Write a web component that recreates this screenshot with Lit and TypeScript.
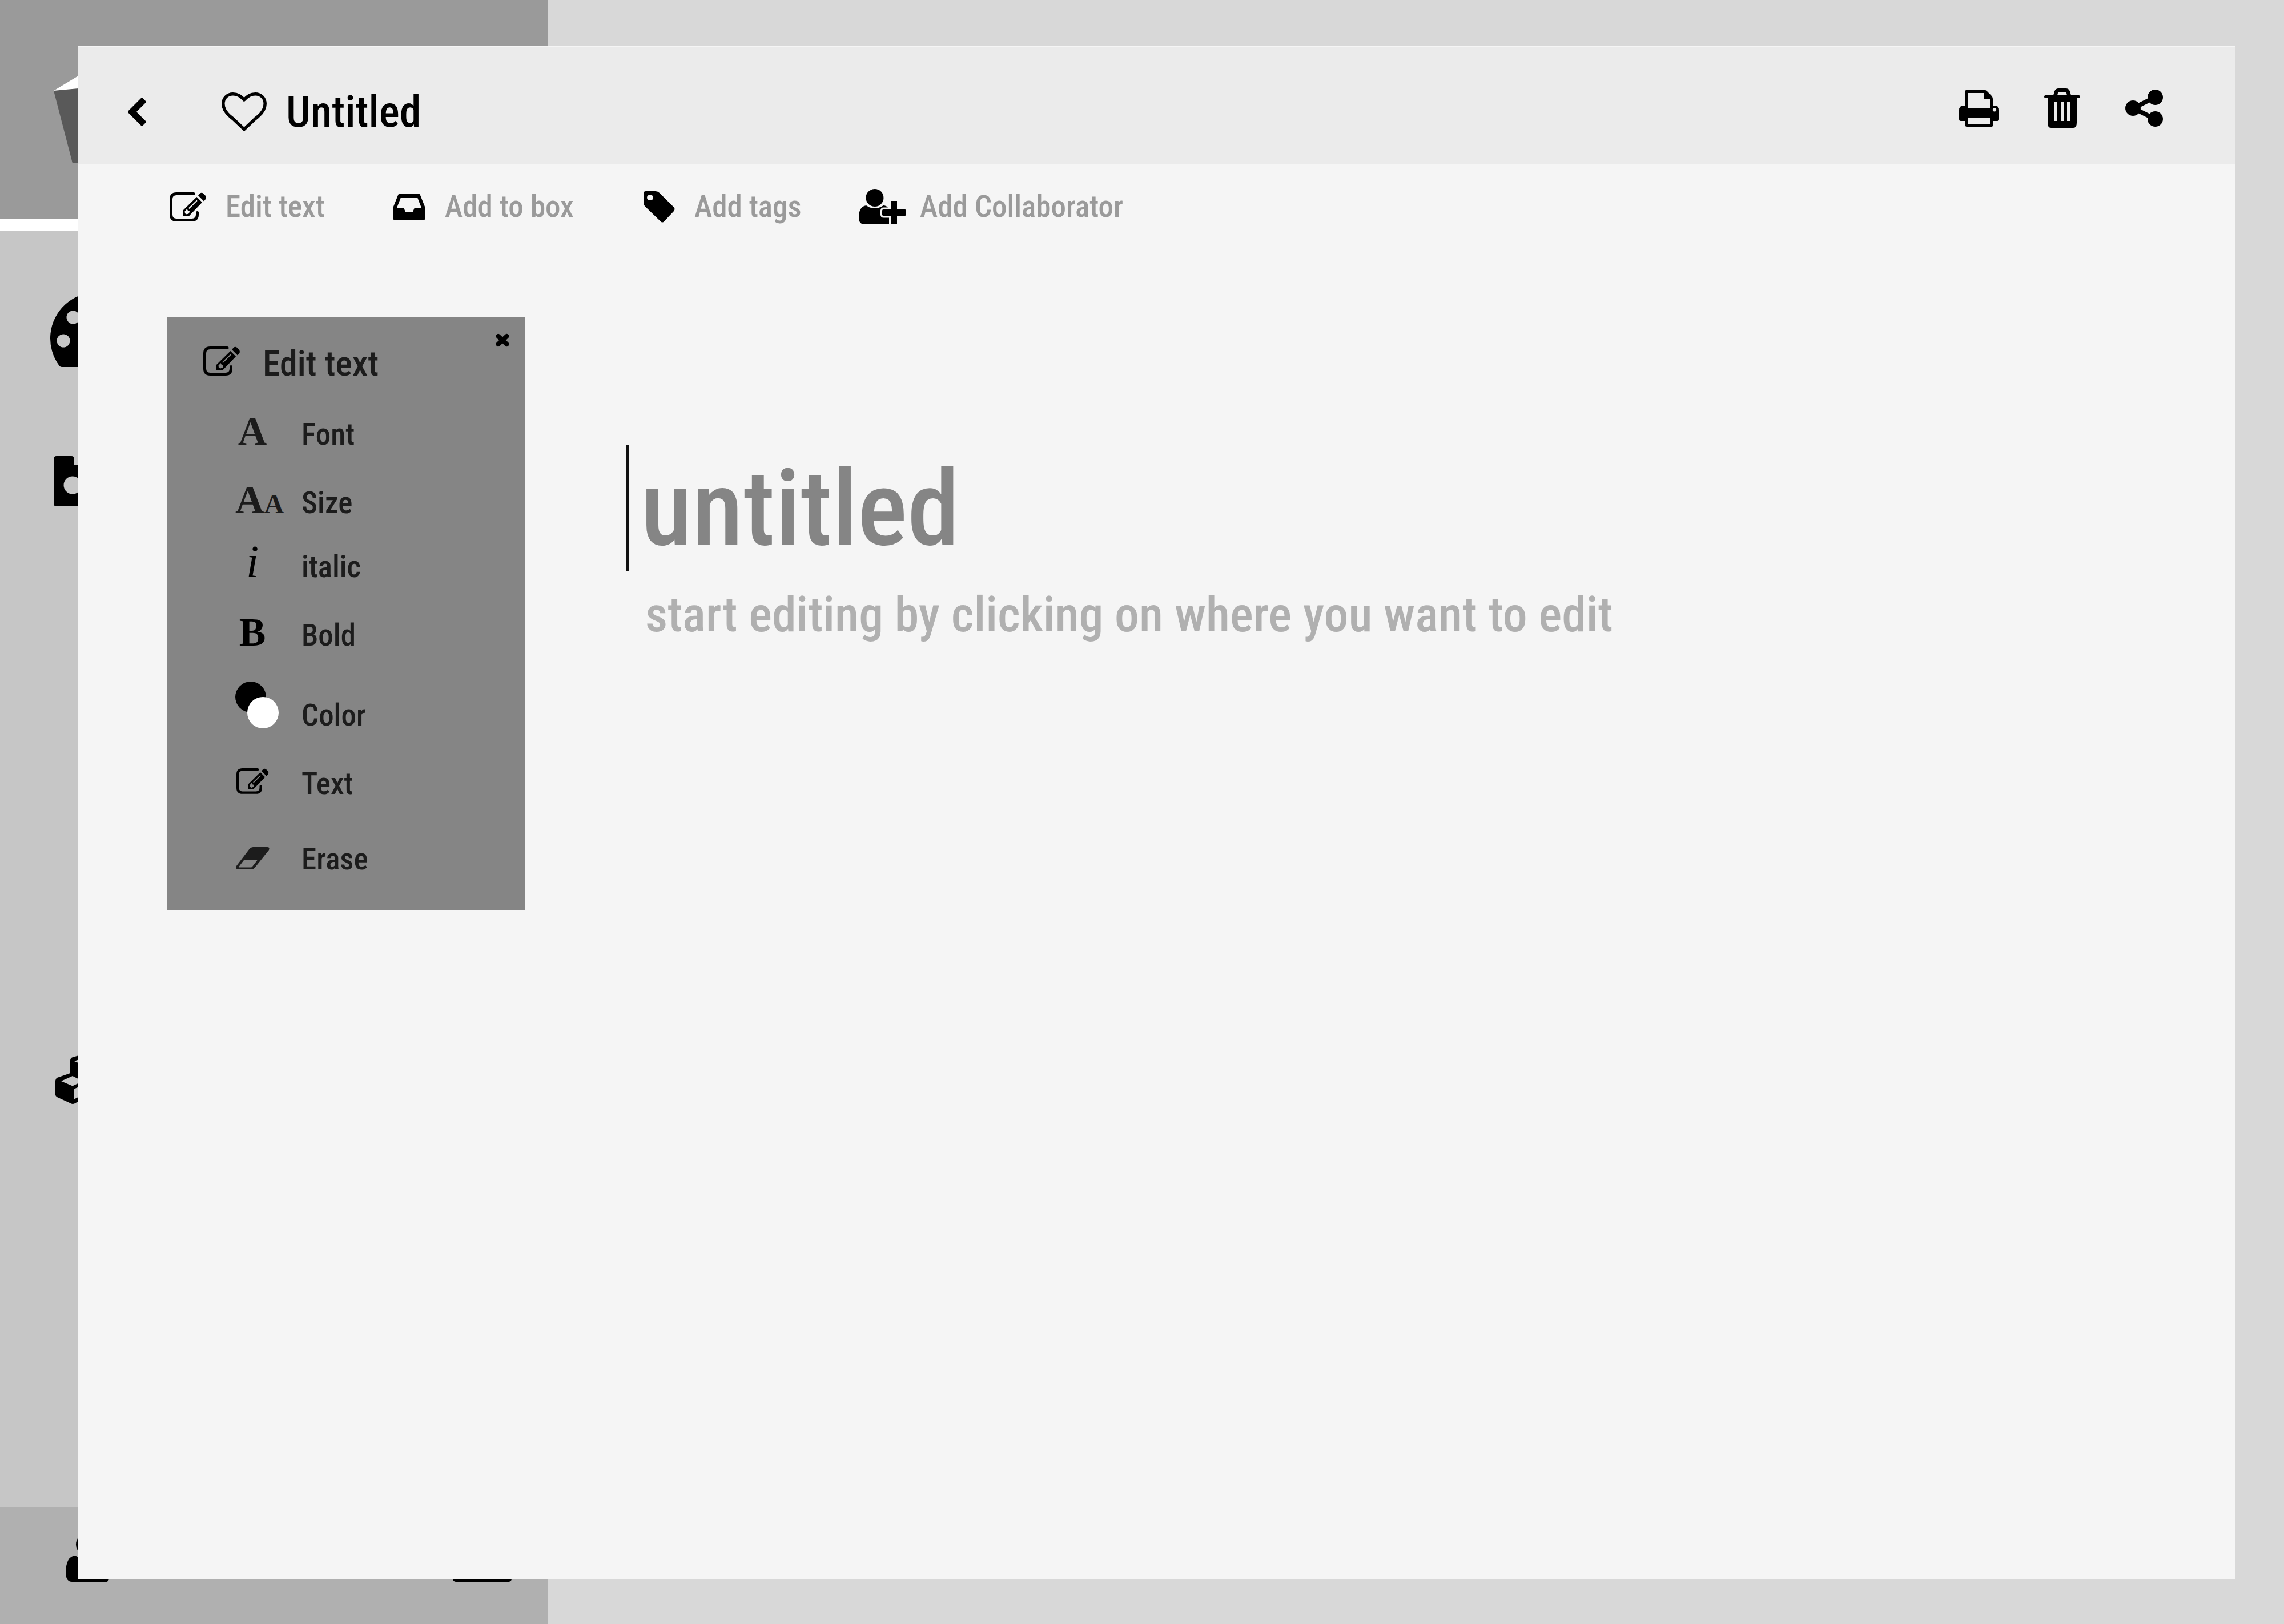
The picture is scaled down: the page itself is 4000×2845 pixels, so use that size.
import { LitElement, css, html, svg, nothing } from "lit";
import { customElement, property } from "lit/decorators.js";

interface Glyph {
  w: number;
  h: number;
  art: unknown;
}

const GLYPHS: Record<string, Glyph> = {
  back: {
    w: 32, h: 50,
    art: svg`<path d="M31 9 15 25 31 41Q32.500 42.500 31 44L26 49Q24.500 50.500 23 49L1 27Q-1 25 1 23L23 1Q24.500 -.5 26 1L31 6Q32.500 7.500 31 9Z"/>`,
  },
  heart: {
    w: 79, h: 67,
    art: svg`<path fill="none" stroke="currentColor" stroke-width="5.500" stroke-linejoin="round" d="M39.500 13C33 6 28 2.800 20 2.800 10 2.800 2.800 10 2.800 20 2.800 29 8 36 15 42L20 46 39.500 64.500 59 46 64 42C71 36 76.200 29 76.200 20 76.200 10 69 2.800 59 2.800 51 2.800 46 6 39.500 13Z"/>`,
  },
  print: {
    w: 70, h: 65,
    art: svg`<path fill-rule="evenodd" d="M11 28V3Q11 0 14 0H43Q46 0 49 3L56 10Q59 13 59 16V28H62Q70 28 70 36V52Q70 55 67 55H59V63Q59 65 57 65H13Q11 65 11 63V55H3Q0 55 0 52V36Q0 28 8 28ZM16 6V33H54V17H46Q43 17 43 14V6ZM16 49V60H54V49ZM62 32A3.200 3.200 0 1 0 62 38.400 3.200 3.200 0 1 0 62 32Z"/>`,
  },
  trash: {
    w: 63, h: 69,
    art: svg`<path fill-rule="evenodd" d="M16 12 18 5Q20 0 25 0H38Q43 0 45 5L47 12H61Q63 12 63 14.500T61 17H57V60Q57 69 51 69H12Q6 69 6 60V17H2Q0 17 0 14.500T2 12ZM23 12H40L39 8Q38 6 36 6H27Q25 6 24 8ZM17 23V57H23V23ZM29 23V57H34V23ZM40 23V57H46V23Z"/>`,
  },
  share: {
    w: 66, h: 65,
    art: svg`<path fill="none" stroke="currentColor" stroke-width="8" d="M52 13.500 14 32.500 52 51.500"/><circle cx="13.500" cy="32.500" r="13.500"/><circle cx="52.500" cy="13.500" r="13.500"/><circle cx="52.500" cy="51.500" r="13.500"/>`,
  },
  edit: {
    w: 64, h: 51,
    art: svg`<path fill="none" stroke="currentColor" stroke-width="5" stroke-linecap="round" d="M42 2.500H12Q2.500 2.500 2.500 12V39Q2.500 48.500 12 48.500H39Q48.500 48.500 48.500 39V35.500"/><path fill-rule="evenodd" d="M23 42V32L47.500 8 57 17.500 33.500 42ZM26.500 33.500 27 37 30 38.500 34 37 35 33 32 32 30.500 29ZM33 27.500 34.500 29 48.500 15 47.500 13.500Z"/><path d="M50 5.500 53 2Q56 -.5 59 2L62.500 5.500Q65 9 63 12L60 15.500Z"/>`,
  },
  inbox: {
    w: 57, h: 46,
    art: svg`<path fill-rule="evenodd" d="M2 46Q0 46 0 44V27Q0 25 1 23L9 3Q10 0 13 0H44Q47 0 48 3L56 23Q57 25 57 27V44Q57 46 55 46ZM14 7 7 25H19L22 32H35L38 25H50L43 7Z"/>`,
  },
  tag: {
    w: 55, h: 55,
    art: svg`<path fill-rule="evenodd" d="M4 0H21Q25 0 28 3L53 28Q56 31 53 35L36 53Q33 56 30 53L3 27Q0 24 0 20V4Q0 0 4 0ZM11.500 6.500A4.800 4.800 0 1 0 11.500 16 4.800 4.800 0 1 0 11.500 6.500Z"/>`,
  },
  addUser: {
    w: 83, h: 62,
    art: svg`<circle cx="28" cy="15.500" r="15.500"/><path d="M13 29Q20 34 28 34T43 29Q48 29 51 32.500H44Q38 32.500 38 38V45Q38 50.500 44 50.500H53V62H10Q0 62 0 50 0 31 13 29Z"/><path d="M57 21H67V36H81Q83 36 83 38V45Q83 47 81 47H67V62H57V47H43Q41 47 41 45V38Q41 36 43 36H57Z"/>`,
  },
  close: {
    w: 24, h: 22,
    art: svg`<path fill="none" stroke="currentColor" stroke-width="8" stroke-linecap="round" d="M4.500 4 19.500 18M19.500 4 4.500 18"/>`,
  },
  swatches: {
    w: 76, h: 77,
    art: svg`<circle cx="27" cy="27" r="27"/><circle cx="48.500" cy="54.500" r="27.500" fill="#fff"/>`,
  },
  eraser: {
    w: 59, h: 39,
    art: svg`<path fill-rule="evenodd" d="M24 3Q27 0 30 0H55Q60 0 58 5L34 35Q31 39 27 39H3Q-1 38 1 33ZM14 23 5.500 34Q5 35.500 6 35.500H26Q28 35.500 29 34L37.500 23Z"/>`,
  },
  logo: {
    w: 120, h: 153,
    art: svg`<path fill="#fff" d="M0 26 43 0H120V26Z"/><path fill="#595959" d="M0 26 43 22 120 26V153H33Z"/>`,
  },
  gauge: {
    w: 161, h: 127,
    art: svg`<path fill-rule="evenodd" d="M16 125A80.500 80.500 0 1 1 145 125Q143 127 141 127H20Q18 127 16 125ZM23 69.500A11.500 11.500 0 1 0 23 92.500 11.500 11.500 0 1 0 23 69.500ZM40 28.500A11.500 11.500 0 1 0 40 51.500 11.500 11.500 0 1 0 40 28.500ZM81 11.500A11.500 11.500 0 1 0 81 34.500 11.500 11.500 0 1 0 81 11.500ZM122 28.500A11.500 11.500 0 1 0 122 51.500 11.500 11.500 0 1 0 122 28.500Z"/>`,
  },
  album: {
    w: 116, h: 88,
    art: svg`<path fill-rule="evenodd" d="M5 0H31Q36 0 36 5V15H111Q116 15 116 20V83Q116 88 111 88H5Q0 88 0 83V5Q0 0 5 0ZM33 35.500A15.500 15.500 0 1 0 33 66.500 15.500 15.500 0 1 0 33 35.500Z"/>`,
  },
  boxes: {
    w: 104, h: 85,
    art: svg`<path fill-rule="evenodd" d="M0 44Q0 41 3 39L26 31V9Q26 5 29 3.500L41 0H63L78 8V31L101 39Q104 41 104 44V70L74 85 52 74 34 84Q30 86 27 84L3 73Q0 71 0 69ZM10 45 30 53.500 48 45 30 36ZM32 59V77L48 69V52ZM33 10 52 18 70 10 52 3Z"/>`,
  },
  user: {
    w: 75, h: 85,
    art: svg`<circle cx="37.500" cy="19.500" r="19.500"/><path d="M17 39Q25 46 37.500 46T58 39Q75 40 76 70V80Q75 84 72 85H11Q0 85 0 68 1 40 17 39Z"/>`,
  },
  mail: {
    w: 103, h: 84,
    art: svg`<rect width="103" height="84" rx="5"/>`,
  },
};

@customElement("line-icon")
export class LineIcon extends LitElement {
  @property() name = "";

  static styles = css`
    :host { display: inline-block; flex: none; vertical-align: bottom; }
    .glyph { display: block; fill: currentColor; overflow: visible; }
  `;

  render() {
    const g = GLYPHS[this.name];
    if (!g) return nothing;
    return html`<svg class="glyph" width=${g.w} height=${g.h} viewBox="0 0 ${g.w} ${g.h}" aria-hidden="true">${g.art}</svg>`;
  }
}

const ACTIONS = [
  { icon: "edit", label: "Edit text" },
  { icon: "inbox", label: "Add to box" },
  { icon: "tag", label: "Add tags" },
  { icon: "addUser", label: "Add Collaborator" },
];

const TOOLS = [
  { label: "Font", mark: html`<span class="letter soft">A</span>` },
  { label: "Size", mark: html`<span class="letter soft">A<span class="small">A</span></span>` },
  { label: "italic", mark: html`<span class="letter slant">i</span>` },
  { label: "Bold", mark: html`<span class="letter">B</span>` },
  { label: "Color", mark: html`<line-icon name="swatches"></line-icon>` },
  { label: "Text", mark: html`<line-icon class="fit" name="edit"></line-icon>` },
  { label: "Erase", mark: html`<line-icon class="soft" name="eraser"></line-icon>` },
];

@customElement("app-root")
export class AppRoot extends LitElement {
  static styles = css`
    :host {
      display: block;
      font-family: "Roboto Condensed", "Liberation Sans Narrow", "Arial Narrow", sans-serif;
      font-weight: 500;
      color: #000;
    }
    * { box-sizing: border-box; }
    button, input, textarea {
      font: inherit;
      color: inherit;
      background: none;
      border: 0;
      margin: 0;
      padding: 0;
      border-radius: 0;
      outline: none;
    }
    button { cursor: pointer; text-align: left; }

    .app {
      display: grid;
      grid-template: minmax(100vh, auto) / minmax(0, 1fr);
      background: #d8d8d8;
    }
    .side, .sheet { grid-area: 1 / 1; }

    .side {
      display: grid;
      grid-template-rows: auto 1fr auto;
      width: 24%;
      background: #c6c6c6;
    }
    .brand {
      display: flex;
      background: #9a9a9a;
      border-bottom: 21px solid #fff;
      padding: 133px 94px 98px;
    }
    .places {
      display: flex;
      flex-direction: column;
      align-items: flex-start;
      gap: 156px;
      padding: 111px 88px 706px;
    }
    .places .last { margin-top: auto; padding-left: 9px; }
    .places .second { padding-left: 6px; }
    .account {
      display: flex;
      justify-content: space-between;
      align-items: flex-end;
      padding: 46px 64px 74px 115px;
      background: #b0b0b0;
    }

    .sheet {
      display: flex;
      flex-direction: column;
      margin: 80px 86px 79px 137px;
      background: #f5f5f5;
      border-top: 3px solid #f5f5f5;
      z-index: 1;
    }
    .head {
      display: flex;
      align-items: center;
      justify-content: space-between;
      height: 205px;
      padding: 8px 126px 0 87px;
      background: #ebebeb;
    }
    .naming { display: flex; align-items: center; padding-top: 12px; }
    .love { margin-left: 132px; }
    .name { margin: 0 0 0 34px; font-size: 76px; line-height: 96px; font-weight: 500; }
    .share { display: flex; align-items: center; gap: 79px; }

    .actions {
      display: grid;
      grid-template-columns: 391px 439px 377px auto;
      justify-content: start;
      padding: 40px 160px;
    }
    .action {
      display: flex;
      align-items: center;
      gap: 34px;
      font-size: 53px;
      line-height: 68px;
    }
    .action:last-child { gap: 24px; }
    .action .text { color: #9a9a9a; white-space: nowrap; }

    .work {
      display: flex;
      align-items: flex-start;
      gap: 178px;
      padding: 119px 155px;
    }
    .panel {
      flex: none;
      width: 627px;
      padding-bottom: 56px;
      background: #858585;
      color: #1c1c1c;
    }
    .top {
      display: flex;
      align-items: flex-end;
      height: 120px;
      padding: 0 27px 0 64px;
    }
    .title {
      display: flex;
      align-items: baseline;
      gap: 40px;
      margin: 0;
      font-size: 62px;
      line-height: 76px;
      font-weight: 500;
    }
    .dark { color: #000; }
    .close { align-self: flex-start; margin: 30px 0 0 auto; color: #000; }
    .tools {
      display: grid;
      grid-template-rows: 120px 120px 112px 120px 140px 120px 132px;
      align-items: end;
      margin: 0;
      padding: 0 0 0 120px;
      list-style: none;
    }
    .tool {
      display: flex;
      align-items: baseline;
      gap: 56px;
      font-size: 53px;
      line-height: 68px;
    }
    .mark {
      display: flex;
      align-items: baseline;
      justify-content: safe center;
      width: 60px;
      color: #000;
    }
    .letter {
      font-family: "Liberation Serif", serif;
      font-weight: 700;
      font-size: 70px;
      line-height: 64px;
      white-space: nowrap;
    }
    .small { font-size: 48px; }
    .slant { font-style: italic; font-weight: 400; font-size: 80px; }
    .soft { color: #1c1c1c; }
    .fit { zoom: 0.88; }

    .page { flex: 1; min-width: 0; padding-top: 225px; }
    .heading {
      display: block;
      width: 100%;
      height: 221px;
      padding-left: 20px;
      border-left: 5px solid #111;
      font-size: 184px;
    }
    .heading::placeholder { color: #858585; opacity: 1; }
    .body {
      display: block;
      width: 100%;
      margin-top: 20px;
      padding-left: 33px;
      font-size: 86px;
      line-height: 112px;
      resize: none;
      overflow: hidden;
    }
    .body::placeholder { color: #b0b0b0; opacity: 1; }
  `;

  render() {
    return html`
      <div class="app">
        <aside class="side">
          <div class="brand"><line-icon name="logo"></line-icon></div>
          <nav class="places" aria-label="Sections">
            <line-icon name="gauge"></line-icon>
            <line-icon class="second" name="album"></line-icon>
            <line-icon class="last" name="boxes"></line-icon>
          </nav>
          <div class="account">
            <line-icon name="user"></line-icon>
            <line-icon name="mail"></line-icon>
          </div>
        </aside>

        <main class="sheet">
          <header class="head">
            <div class="naming">
              <button aria-label="Back"><line-icon name="back"></line-icon></button>
              <button class="love" aria-label="Favourite"><line-icon name="heart"></line-icon></button>
              <h1 class="name">Untitled</h1>
            </div>
            <div class="share">
              <button aria-label="Print"><line-icon name="print"></line-icon></button>
              <button aria-label="Delete"><line-icon name="trash"></line-icon></button>
              <button aria-label="Share"><line-icon name="share"></line-icon></button>
            </div>
          </header>

          <div class="actions">
            ${ACTIONS.map((a) => html`
              <button class="action">
                <line-icon name=${a.icon}></line-icon><span class="text">${a.label}</span>
              </button>`)}
          </div>

          <div class="work">
            <section class="panel">
              <div class="top">
                <h2 class="title"><line-icon class="dark" name="edit"></line-icon>Edit text</h2>
                <button class="close" aria-label="Close"><line-icon name="close"></line-icon></button>
              </div>
              <ul class="tools">
                ${TOOLS.map((t) => html`
                  <li><button class="tool"><span class="mark">${t.mark}</span>${t.label}</button></li>`)}
              </ul>
            </section>

            <div class="page">
              <input class="heading" aria-label="Title" placeholder="untitled" />
              <textarea class="body" rows="2" aria-label="Text" placeholder="start editing by clicking on where you want to edit"></textarea>
            </div>
          </div>
        </main>
      </div>
    `;
  }
}
